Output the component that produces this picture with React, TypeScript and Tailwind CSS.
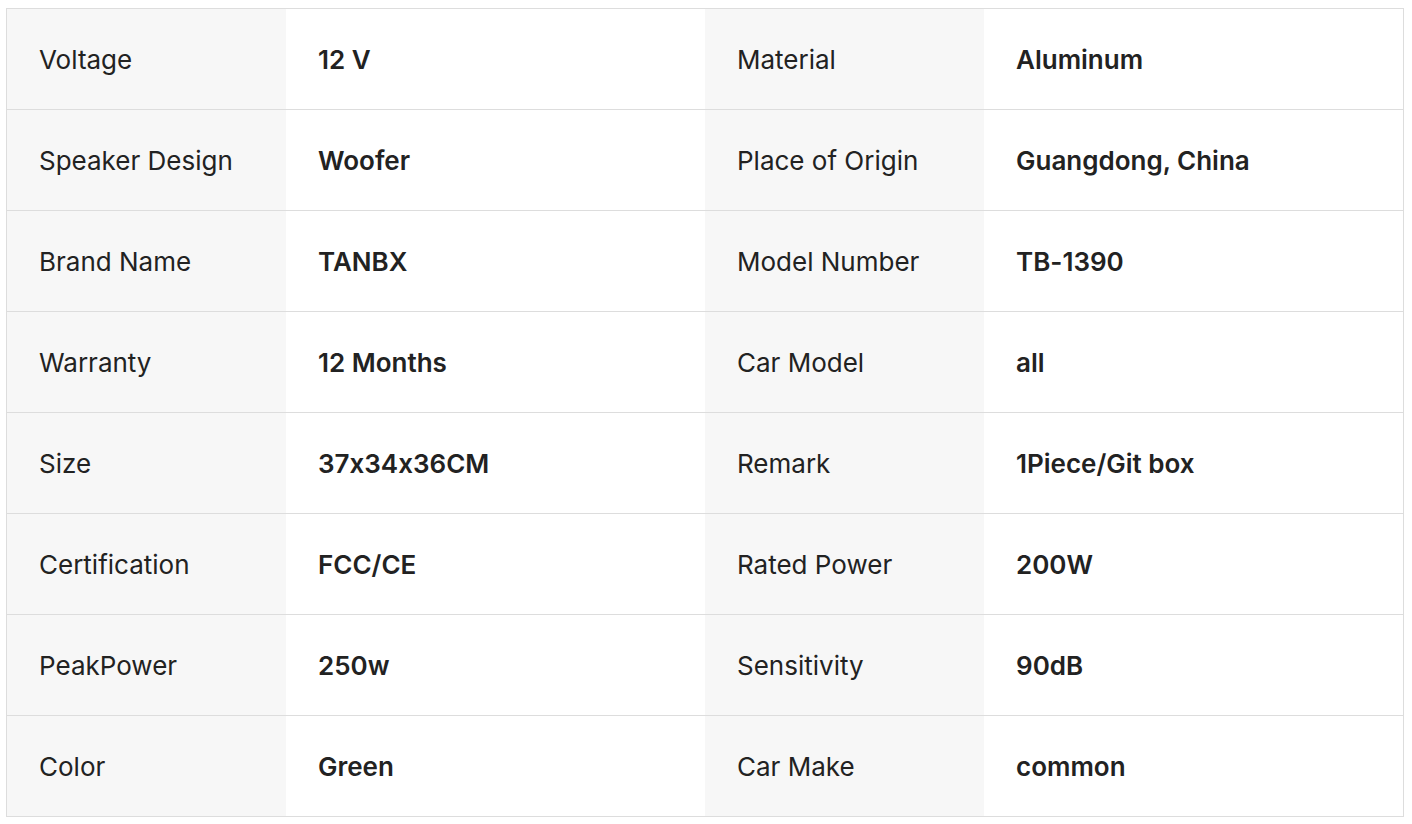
import React from "react";

const rows: [string, string, string, string][] = [
  ["Voltage", "12 V", "Material", "Aluminum"],
  ["Speaker Design", "Woofer", "Place of Origin", "Guangdong, China"],
  ["Brand Name", "TANBX", "Model Number", "TB-1390"],
  ["Warranty", "12 Months", "Car Model", "all"],
  ["Size", "37x34x36CM", "Remark", "1Piece/Git box"],
  ["Certification", "FCC/CE", "Rated Power", "200W"],
  ["PeakPower", "250w", "Sensitivity", "90dB"],
  ["Color", "Green", "Car Make", "common"],
];

export default function App() {
  return (
    <div
      className="min-h-screen bg-white pl-[6px] pt-[8px]"
      style={{ fontFamily: "Inter, 'Noto Sans', sans-serif", fontFeatureSettings: "'calt' 0" }}
    >
      <div className="w-[1398px] border border-[#dddddd] text-[26px] text-[#222222]">
        {rows.map((r, i) => (
          <div
            key={i}
            className={
              "box-content grid h-[100px] grid-cols-[279px_419px_279px_419px] items-stretch " +
              (i > 0 ? "border-t border-[#dddddd]" : "")
            }
          >
            <div className="flex items-center bg-[#f7f7f7] pl-[32px]">{r[0]}</div>
            <div className="flex items-center pl-[32px] font-semibold">{r[1]}</div>
            <div className="flex items-center bg-[#f7f7f7] pl-[32px]">{r[2]}</div>
            <div className="flex items-center pl-[32px] font-semibold">{r[3]}</div>
          </div>
        ))}
      </div>
    </div>
  );
}
